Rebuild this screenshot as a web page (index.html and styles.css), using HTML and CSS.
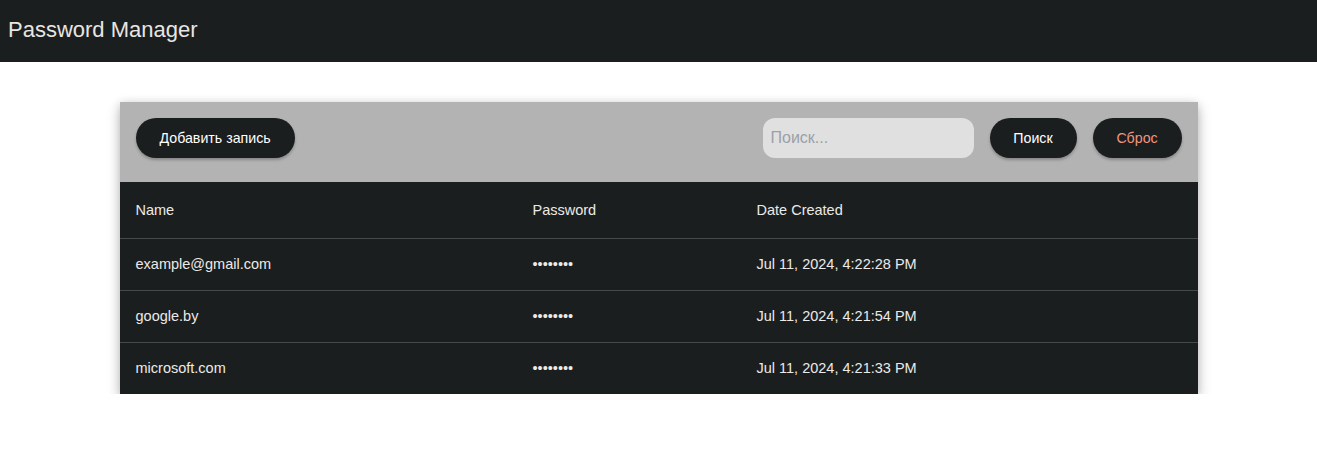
FILE: index.html
```html
<!DOCTYPE html>
<html lang="ru">
<head>
<meta charset="utf-8">
<title>Password Manager</title>
<link rel="stylesheet" href="styles.css">
</head>
<body>
<header class="appbar">
  <h1 class="appbar-title">Password Manager</h1>
</header>
<main class="content">
  <section class="card">
    <div class="toolbar">
      <button class="btn">Добавить запись</button>
      <div class="toolbar-right">
        <input class="search" type="text" placeholder="Поиск...">
        <button class="btn btn-search">Поиск</button>
        <button class="btn btn-reset">Сброс</button>
      </div>
    </div>
    <table class="table">
      <thead>
        <tr><th class="col-name">Name</th><th class="col-pass">Password</th><th>Date Created</th></tr>
      </thead>
      <tbody>
        <tr><td>example@gmail.com</td><td>••••••••</td><td>Jul 11, 2024, 4:22:28 PM</td></tr>
        <tr><td>google.by</td><td>••••••••</td><td>Jul 11, 2024, 4:21:54 PM</td></tr>
        <tr><td>microsoft.com</td><td>••••••••</td><td>Jul 11, 2024, 4:21:33 PM</td></tr>
      </tbody>
    </table>
  </section>
</main>
</body>
</html>
```

FILE: styles.css
```css
* { box-sizing: border-box; }
html, body { margin: 0; padding: 0; background: #ffffff; }
body { font-family: "Liberation Sans", Arial, sans-serif; color: #e8e6e3; }

.appbar {
  height: 62px;
  background: #1b1e1f;
  display: flex;
  align-items: center;
  padding: 0 8px;
}
.appbar-title {
  margin: 0;
  font-size: 22px;
  font-weight: 400;
  color: #e8e6e3;
  line-height: 1;
  padding-bottom: 3px;
}

.content {
  padding-top: 40px;
  display: flex;
  justify-content: center;
}
.card {
  width: 1078px;
  background: #1b1e1f;
  box-shadow: 0 5px 12px 0 rgba(0,0,0,0.28), 0 0 8px 0 rgba(0,0,0,0.08);
}
.toolbar {
  height: 80px;
  background: #b3b3b3;
  display: flex;
  align-items: flex-start;
  justify-content: space-between;
  padding: 16px 16px 0;
}
.toolbar-right {
  display: flex;
  align-items: center;
  gap: 16px;
}
.btn {
  height: 40px;
  border: none;
  border-radius: 20px;
  background: #1b1e1f;
  color: #ffffff;
  font-family: "Liberation Sans", Arial, sans-serif;
  font-size: 14.2px;
  padding: 0 24px;
  box-shadow: 0 2px 3px rgba(0,0,0,0.25);
  cursor: pointer;
}
.btn-search { width: 87px; padding: 0; }
.btn-reset { width: 89px; padding: 0; color: #f2957b; }
.search {
  width: 211px;
  height: 40px;
  border: none;
  border-radius: 12px;
  background: #e0e0e0;
  padding: 0 8px;
  font-family: "Liberation Sans", Arial, sans-serif;
  font-size: 16px;
  color: #333;
  outline: none;
}
.search::placeholder { color: #9aa0a8; }

.table {
  width: 100%;
  border-collapse: collapse;
  font-size: 14.5px;
  color: #eceae7;
}
.table th, .table td {
  text-align: left;
  font-weight: 400;
  padding: 0 16px;
  border-bottom: 1px solid #45494b;
}
.table th { height: 56px; }
.table td { height: 52px; }
.table tbody tr:last-child td { border-bottom: none; }
.col-name { width: 397px; }
.col-pass { width: 224px; }
```
